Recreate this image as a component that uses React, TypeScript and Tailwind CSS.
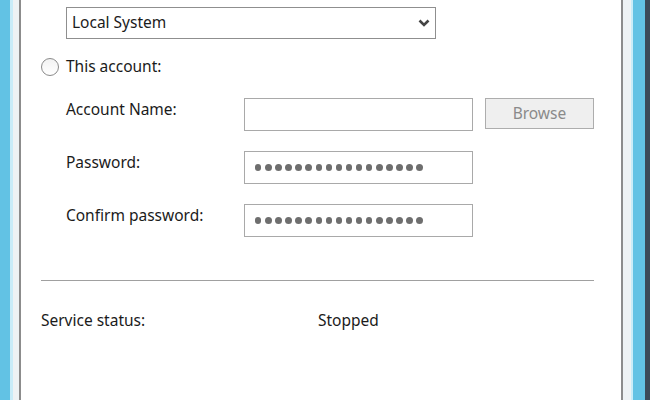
import React from "react";

const font = { fontFamily: '"Noto Sans", "Open Sans", Arial, sans-serif' };

function Dots({ count }: { count: number }) {
  return (
    <div className="flex gap-[3.6px] pl-[10px]">
      {Array.from({ length: count }).map((_, i) => (
        <span key={i} className="h-[7px] w-[6.5px] rounded-full bg-[#6e6e6e]" />
      ))}
    </div>
  );
}

function Field({
  label,
  children,
  extra,
}: {
  label: string;
  children?: React.ReactNode;
  extra?: React.ReactNode;
}) {
  return (
    <div className="flex items-start">
      <div className="w-[223px] pl-[45px] text-[15.5px] text-[#1b1b1b]">{label}</div>
      <div className="flex h-[33px] w-[229px] items-center border border-[#a9a9a9] bg-white">
        {children}
      </div>
      {extra}
    </div>
  );
}

export default function App() {
  return (
    <div className="flex h-[400px] w-[650px] overflow-hidden bg-white" style={font}>
      {/* left window chrome */}
      <div className="w-[10px] bg-[#62c2e4]" />
      <div className="w-[3px] bg-[#c9ecf8]" />
      <div className="w-[6px] bg-[#eef2f4]" />
      <div className="w-[2px] bg-[#8c8c8c]" />

      <div className="flex w-[602px] flex-col bg-white">
        {/* dropdown */}
        <div className="mt-[7px] ml-[45px] flex h-[32px] w-[370px] items-center justify-between border border-[#8f8f8f] bg-white pl-[5px] pr-[5px] text-[15.5px] text-[#1b1b1b]">
          <span>Local System</span>
          <svg width="12" height="8" viewBox="0 0 12 8">
            <path d="M1.5 1.5 L6 6 L10.5 1.5" fill="none" stroke="#444" strokeWidth="2.6" />
          </svg>
        </div>

        {/* this account radio */}
        <div className="mt-[18px] flex h-[20px] items-center gap-[7px] pl-[20px] text-[15.5px] text-[#1b1b1b]">
          <span className="h-[18px] w-[18px] rounded-full border border-[#8a8a8a] bg-gradient-to-b from-[#f2f2f2] to-white" />
          <span>This account:</span>
        </div>

        <div className="mt-[21px] flex flex-col gap-[20px]">
          <Field
            label="Account Name:"
            extra={
              <div className="ml-[12px] flex h-[31px] w-[109px] items-center justify-center border border-[#adadad] bg-[#efefef] text-[15.5px] text-[#8a8a8a]">
                Browse
              </div>
            }
          />
          <Field label="Password:">
            <Dots count={17} />
          </Field>
          <Field label="Confirm password:">
            <Dots count={17} />
          </Field>
        </div>

        <div className="mt-[43px] ml-[20px] h-[1px] w-[553px] bg-[#a0a0a0]" />

        <div className="mt-[28px] flex text-[15.5px] text-[#1b1b1b]">
          <span className="w-[297px] pl-[20px]">Service status:</span>
          <span>Stopped</span>
        </div>
      </div>

      {/* right window chrome */}
      <div className="w-[2px] bg-[#8c8c8c]" />
      <div className="w-[8px] bg-[#eef2f4]" />
      <div className="w-[2px] bg-[#c9ecf8]" />
      <div className="w-[12px] bg-[#62c2e4]" />
      <div className="w-[5px] bg-[#3b4a58]" />
    </div>
  );
}
